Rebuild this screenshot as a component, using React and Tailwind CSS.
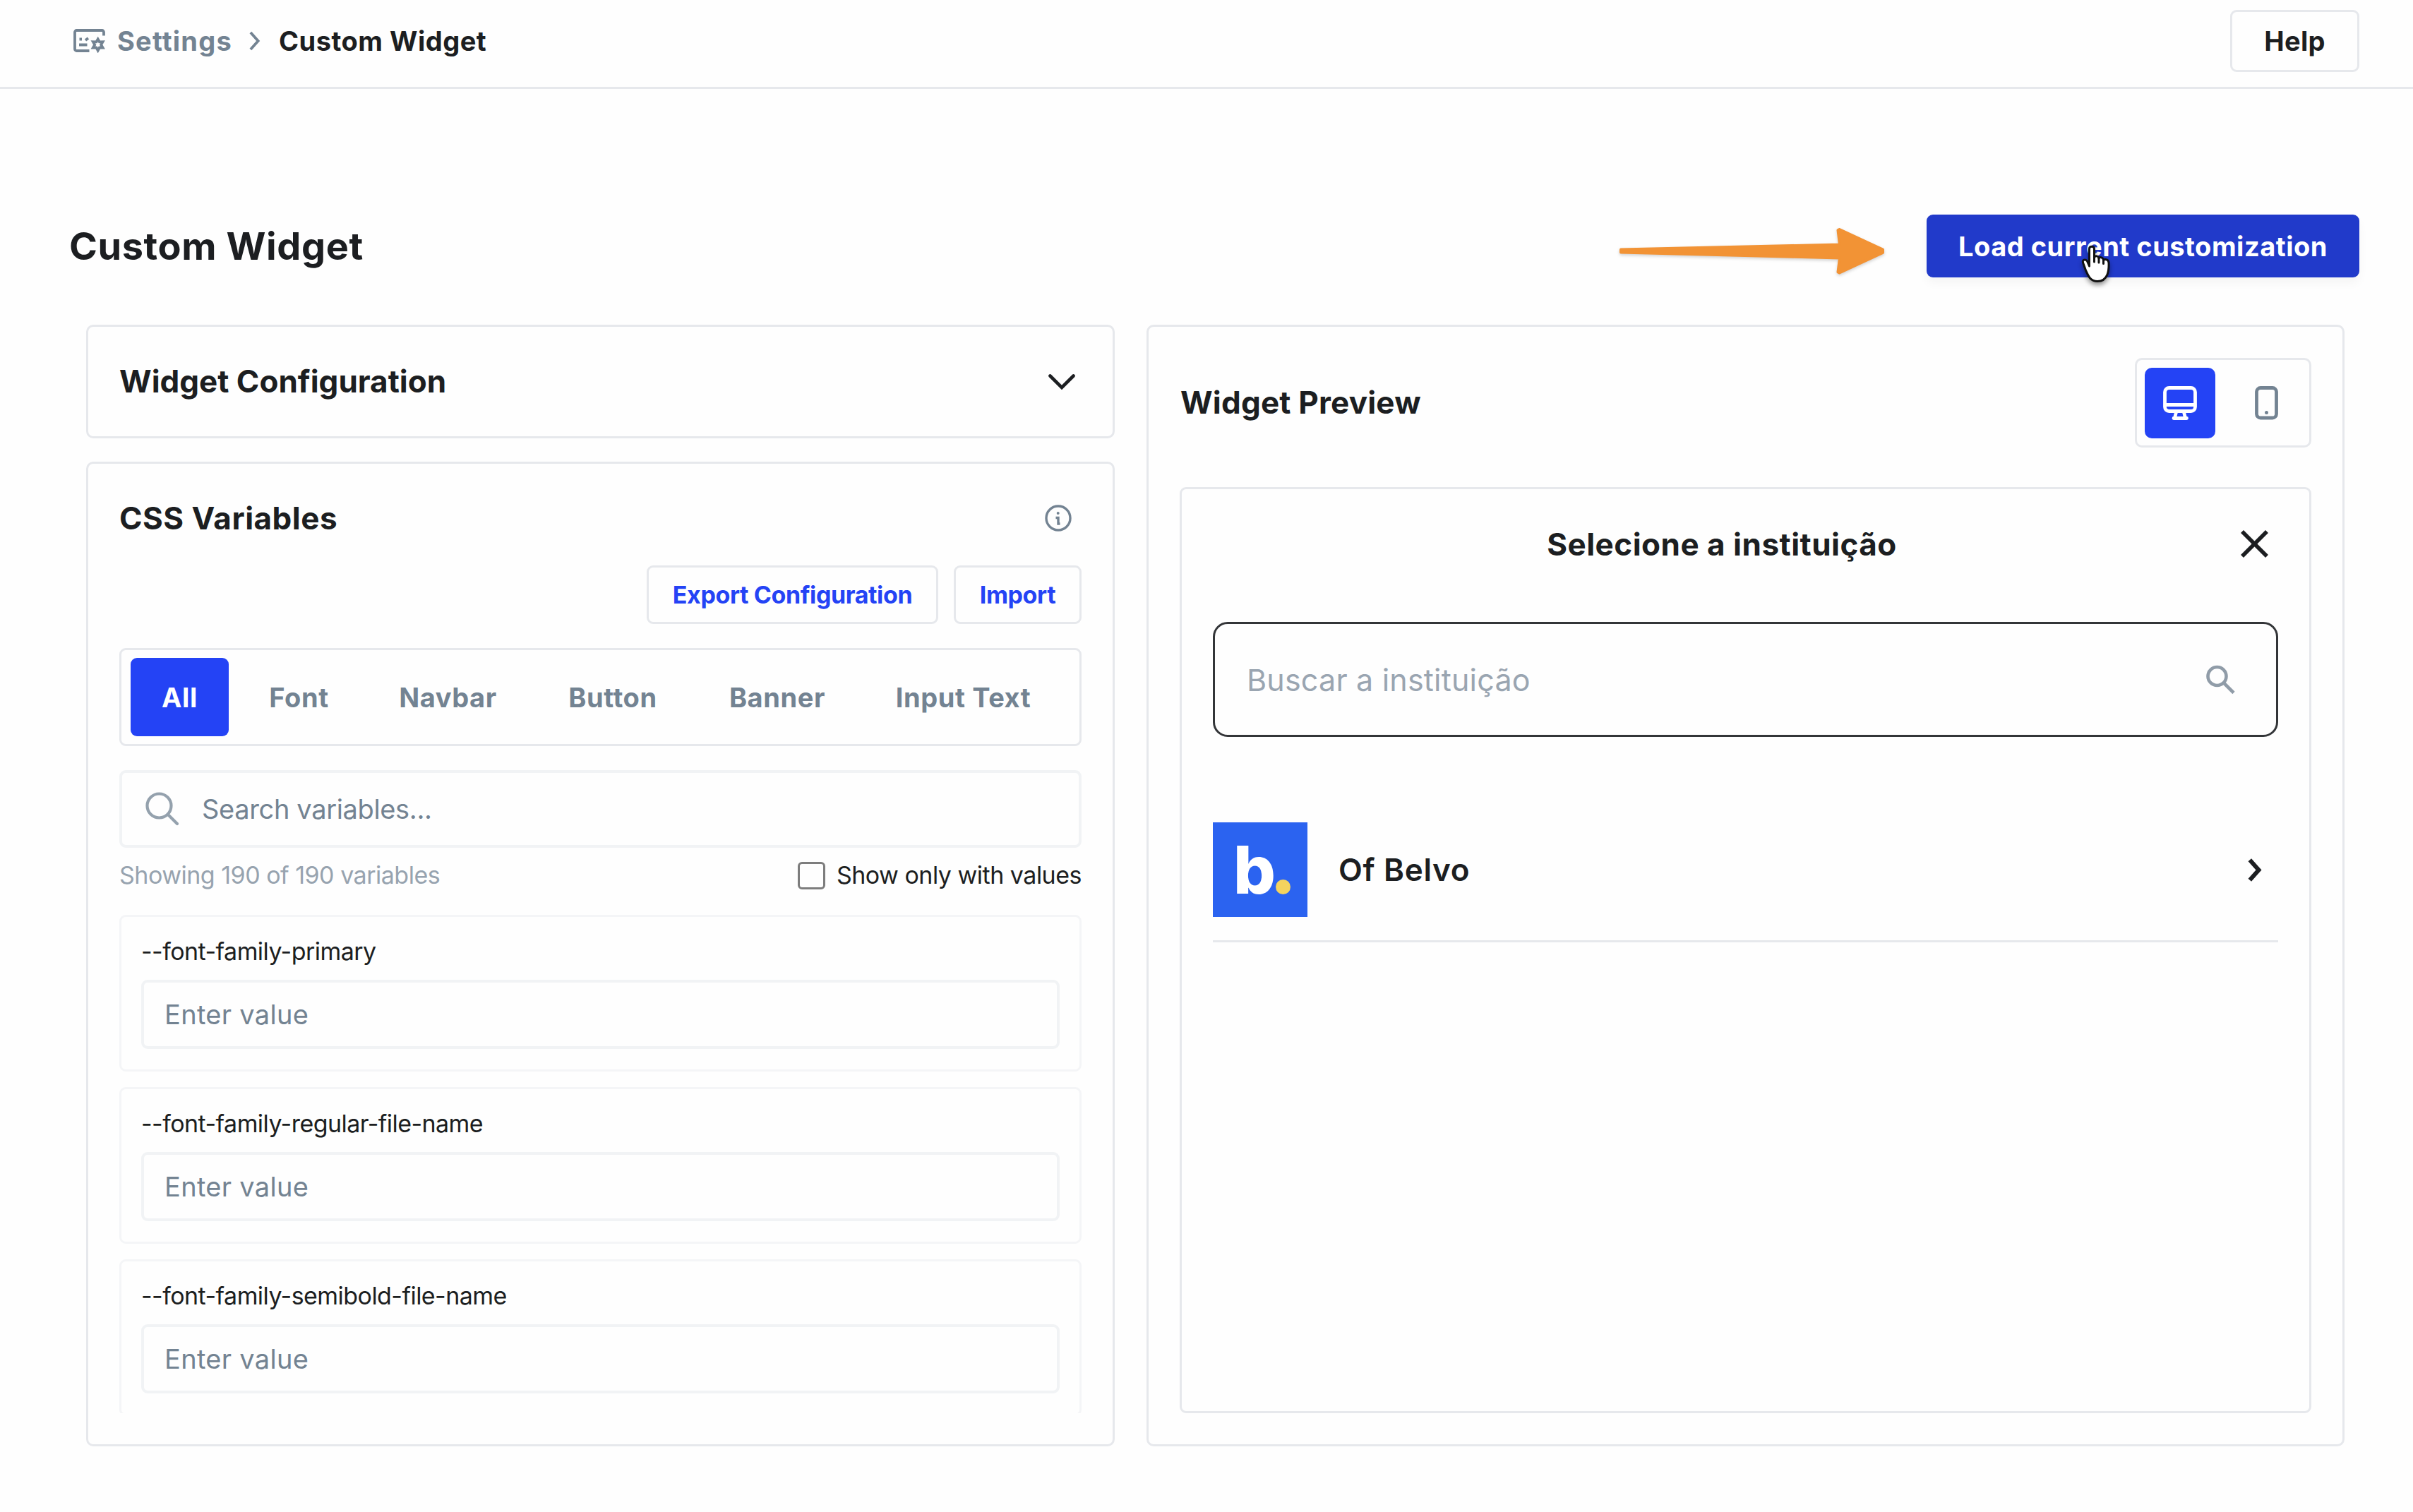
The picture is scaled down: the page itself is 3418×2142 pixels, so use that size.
import React, { useState } from "react";

const TABS = [
  { name: "All", width: "w-[139px]" },
  { name: "Font", width: "w-[171px]" },
  { name: "Navbar", width: "w-[223px]" },
  { name: "Button", width: "w-[216px]" },
  { name: "Banner", width: "w-[222px]" },
  { name: "Input Text", width: "w-[277px]" },
];

const VARIABLES = [
  "--font-family-primary",
  "--font-family-regular-file-name",
  "--font-family-semibold-file-name",
];

function SettingsIcon() {
  return (
    <svg width="46" height="34" viewBox="0 0 46 34" fill="none" stroke="#738392" strokeWidth="3.8">
      <path d="M43 9.500V4.500A2.500 2.500 0 0 0 40.500 2H4.500A2.500 2.500 0 0 0 2 4.500V28.500A2.500 2.500 0 0 0 4.500 31H22.500" />
      <path d="M8.500 14.500h3.500M17 16l4-3M8 22.500h11.500" />
      <path d="M34.700 14.500l2.200 3.800 4.700-.1-2.400 4.200 2.400 4.200-4.700-.1-2.200 4-2.200-4-4.700.1 2.400-4.200-2.400-4.200 4.700.1z" />
    </svg>
  );
}

function Chevron({ className, strokeWidth }) {
  return (
    <svg className={className} viewBox="0 0 19 33" fill="none" stroke="currentColor" strokeWidth={strokeWidth}>
      <path d="M2.300 2.300L15 16.500 2.300 30.700" />
    </svg>
  );
}

function MonitorIcon() {
  return (
    <svg width="48" height="48" viewBox="0 0 48 48" fill="none" stroke="#fff" strokeWidth="4.800" strokeLinecap="round">
      <rect x="2.500" y="2.500" width="43" height="33" rx="6" />
      <path d="M3 26.500h42M18.500 37l-2 8M29.500 37l2 8M15 45.500h18.500" />
    </svg>
  );
}

function PhoneIcon() {
  return (
    <svg width="33" height="48" viewBox="0 0 33 48" fill="none" stroke="#738392" strokeWidth="4.800">
      <rect x="2.500" y="2.500" width="28" height="42.500" rx="5.500" />
      <circle cx="16.500" cy="37.500" r="2.500" fill="#738392" stroke="none" />
    </svg>
  );
}

function Arrow() {
  return (
    <svg
      className="mr-[59px] ml-auto shrink-0 drop-shadow-[0_2px_2px_rgba(0,0,0,0.18)]"
      width="378"
      height="84"
      viewBox="0 0 378 84"
      fill="#f29335"
      stroke="#f29335"
      strokeWidth="4"
      strokeLinejoin="round"
    >
      <path d="M4 46.500L314 39.500 311.500 19 313.500 18 375 46.500 375 51 313.500 79.500 311.500 78.500 314 58.500 4 50.500Z" />
    </svg>
  );
}

function HandCursor() {
  return (
    <svg
      className="absolute left-[219px] top-[43px] drop-shadow-[0_4px_3px_rgba(0,0,0,0.4)]"
      width="42"
      height="55"
      viewBox="0 0 42 55"
      fill="#fff"
      stroke="#111"
      strokeWidth="3"
      strokeLinejoin="round"
      strokeLinecap="round"
    >
      <path d="M11.500 5.500C11.500 1 18.500 1 18.500 5.500V18C19.500 15 24.500 15 25 19 26.500 16.500 31 17.500 31.500 21.500 34 19.500 38.500 20.500 39 25 39.500 36 38 51.500 23 51.500 13 51.500 10 44 6.500 36L2.500 25C1.500 21 6 19.500 8.500 23L11.500 30Z" />
      <path d="M18.500 17v7M25 19v6M31.500 21.500v5" />
    </svg>
  );
}

function VariableCard({ name }) {
  return (
    <div className="flex h-[222px] shrink-0 flex-col rounded-[9px] border-[3px] border-[#f4f5f7] px-[28px] pt-[32px]">
      <div className="text-[34px] leading-none font-[430] tracking-[-0.55px]">{name}</div>
      <div className="mt-[23px] flex h-[98px] items-center rounded-[9px] border-4 border-[#f1f3f5] px-[29px] text-[38px] leading-none font-[440] tracking-[0.3px] text-[#738392]">
        Enter value
      </div>
    </div>
  );
}

function CssVariables() {
  const [tab, setTab] = useState("All");

  return (
    <section className="flex h-[1395px] flex-col rounded-[10px] border-[3px] border-[#e6e8ec] px-[44px] pt-[55px]">
      <div className="flex h-[44px] items-center justify-between pr-[14px]">
        <h2 className="text-[44px] leading-none font-[650] tracking-[0.5px]">CSS Variables</h2>
        <svg width="38" height="38" viewBox="0 0 38 38" fill="none" stroke="#738392" strokeWidth="3.4">
          <circle cx="19" cy="19" r="17" />
          <path d="M15.500 18.500h3.500v8.500h2.500" />
          <circle cx="18.700" cy="12" r="2" fill="#738392" stroke="none" />
        </svg>
      </div>

      <div className="mt-[45px] flex h-[83px] justify-end gap-[22px] text-[34px] leading-none font-[650] tracking-[-0.4px] text-[#2443f5]">
        <button className="w-[413px] rounded-[9px] border-[3px] border-[#e6e8ec]">Export Configuration</button>
        <button className="w-[181px] rounded-[9px] border-[3px] border-[#e6e8ec]">Import</button>
      </div>

      <div className="mt-[34px] flex h-[139px] gap-[14px] rounded-[9px] border-[3px] border-[#e6e8ec] px-[13px] py-[11px] text-[38px] leading-none font-[650] tracking-[0.6px]">
        {TABS.map((t) => (
          <button
            key={t.name}
            onClick={() => setTab(t.name)}
            className={`${t.width} shrink-0 rounded-[9px] ${tab === t.name ? "bg-[#2443f5] text-white" : "text-[#738392]"}`}
          >
            {t.name}
          </button>
        ))}
      </div>

      <div className="mt-[34px] flex h-[110px] items-center rounded-[9px] border-4 border-[#f1f3f5] pl-[33px] text-[38px] leading-none font-[440] text-[#738392]">
        <svg width="48" height="48" viewBox="0 0 48 48" fill="none" stroke="#94a1ad" strokeWidth="4.200" strokeLinecap="round">
          <circle cx="19.500" cy="19.500" r="17" />
          <path d="M32 32l13 13" />
        </svg>
        <span className="ml-[32px] tracking-[-0.35px]">Search variables...</span>
      </div>

      <div className="mt-[19px] flex h-[40px] items-center justify-between text-[34px] leading-none font-[430] tracking-[-0.5px]">
        <span className="text-[#97a3af]">Showing 190 of 190 variables</span>
        <label className="flex items-center gap-[16px]">
          <span className="h-[39px] w-[39px] rounded-[6px] border-[3px] border-[#7d7d7d]" />
          Show only with values
        </label>
      </div>

      <div className="mt-[36px] flex h-[706px] flex-col gap-[22px] overflow-hidden">
        {VARIABLES.map((name) => (
          <VariableCard key={name} name={name} />
        ))}
      </div>
    </section>
  );
}

function WidgetPreview() {
  return (
    <section className="h-[1589px] w-[1697px] rounded-[10px] border-[3px] border-[#e6e8ec] px-[44px] pt-[44px]">
      <div className="flex h-[127px] items-center justify-between">
        <h2 className="pb-[2px] pl-[1px] text-[44px] leading-none font-[650] tracking-[0.2px]">Widget Preview</h2>
        <div className="flex h-[127px] items-center gap-[22px] rounded-[10px] border-[3px] border-[#e6e8ec] px-[11px]">
          <button className="flex h-[100px] w-[100px] items-center justify-center rounded-[10px] bg-[#2443f5]">
            <MonitorIcon />
          </button>
          <button className="flex h-[100px] w-[100px] items-center justify-center">
            <PhoneIcon />
          </button>
        </div>
      </div>

      <div className="mt-[56px] h-[1312px] rounded-[9px] border-[3px] border-[#e6e8ec] px-[44px]">
        <div className="flex h-[155px] items-center">
          <h3 className="flex-1 text-center text-[44px] leading-none font-[650] tracking-[0.5px]">Selecione a instituição</h3>
          <button className="flex w-[67px] justify-center">
            <svg width="39" height="39" viewBox="0 0 39 39" stroke="#1c1e21" strokeWidth="5.600">
              <path d="M2 2l35 35M37 2L2 37" />
            </svg>
          </button>
        </div>

        <div className="mt-[33px] flex h-[163px] items-center justify-between rounded-[21px] border-[3px] border-[#333538] pr-[58px] pl-[43px]">
          <span className="pt-[2px] pl-[2px] text-[43px] leading-none tracking-[0.2px] text-[#9aa5b1]">Buscar a instituição</span>
          <svg width="41" height="42" viewBox="0 0 41 42" fill="none" stroke="#909ca8" strokeWidth="4.600">
            <circle cx="15.500" cy="16" r="13" />
            <path d="M25 25.500l14 14" />
          </svg>
        </div>

        <div className="mt-[121px] flex items-center border-b-[3px] border-[#e6e8ec] pr-[23px] pb-[33px]">
          <div className="flex h-[134px] w-[134px] items-end bg-[#2b63f0] pb-[32px] pl-[29px]">
            <span className="flex h-[70px] items-center text-[94px] leading-none font-extrabold text-white">b</span>
            <span className="h-[21px] w-[21px] rounded-full bg-[#f4d35e]" />
          </div>
          <span className="ml-[44px] text-[44px] leading-none font-[640] tracking-[0.7px]">Of Belvo</span>
          <Chevron className="ml-auto h-[33px] w-[20px]" strokeWidth={6} />
        </div>
      </div>
    </section>
  );
}

export default function App() {
  return (
    <div className="h-[2142px] w-[3418px] overflow-hidden bg-[#fefefe] font-['Inter','Liberation_Sans',sans-serif] text-[#1c1e21]">
      <header className="flex h-[126px] items-center justify-between border-b-[3px] border-[#e6e8ec] pr-[76px] pb-[7px] pl-[104px] text-[38px] leading-none font-[650]">
        <nav className="flex items-center text-[#738392]">
          <SettingsIcon />
          <span className="ml-[16px] tracking-[1.2px]">Settings</span>
          <Chevron className="ml-[24px] h-[28px] w-[16px]" strokeWidth={4.6} />
          <span className="ml-[26px] tracking-[0.5px] text-[#1c1e21]">Custom Widget</span>
        </nav>
        <button className="h-[88px] w-[183px] rounded-[9px] border-[3px] border-[#e6e8ec] tracking-[0.3px]">Help</button>
      </header>

      <main>
        <div className="mt-[178px] flex h-[89px] items-center pr-[76px] pl-[98px]">
          <h1 className="text-[54px] leading-none font-[650] tracking-[0.6px]">Custom Widget</h1>
          <Arrow />
          <button className="relative h-[89px] w-[613px] rounded-[9px] bg-[#213aca] text-[38px] leading-none font-[650] tracking-[0.5px] text-white shadow-[0_8px_14px_rgba(0,0,0,0.04)]">
            Load current customization
            <HandCursor />
          </button>
        </div>

        <div className="mt-[67px] flex gap-[45px] pl-[122px]">
          <div className="flex w-[1457px] flex-col gap-[33px]">
            <section className="flex h-[161px] items-center justify-between rounded-[10px] border-[3px] border-[#e6e8ec] pr-[53px] pl-[44px]">
              <h2 className="pb-[2px] text-[44px] leading-none font-[650] tracking-normal">Widget Configuration</h2>
              <svg width="38" height="22" viewBox="0 0 38 22" fill="none" stroke="currentColor" strokeWidth="4.600" strokeLinecap="round">
                <path d="M2.500 2.500L19 19 35.500 2.500" />
              </svg>
            </section>
            <CssVariables />
          </div>
          <WidgetPreview />
        </div>
      </main>
    </div>
  );
}
